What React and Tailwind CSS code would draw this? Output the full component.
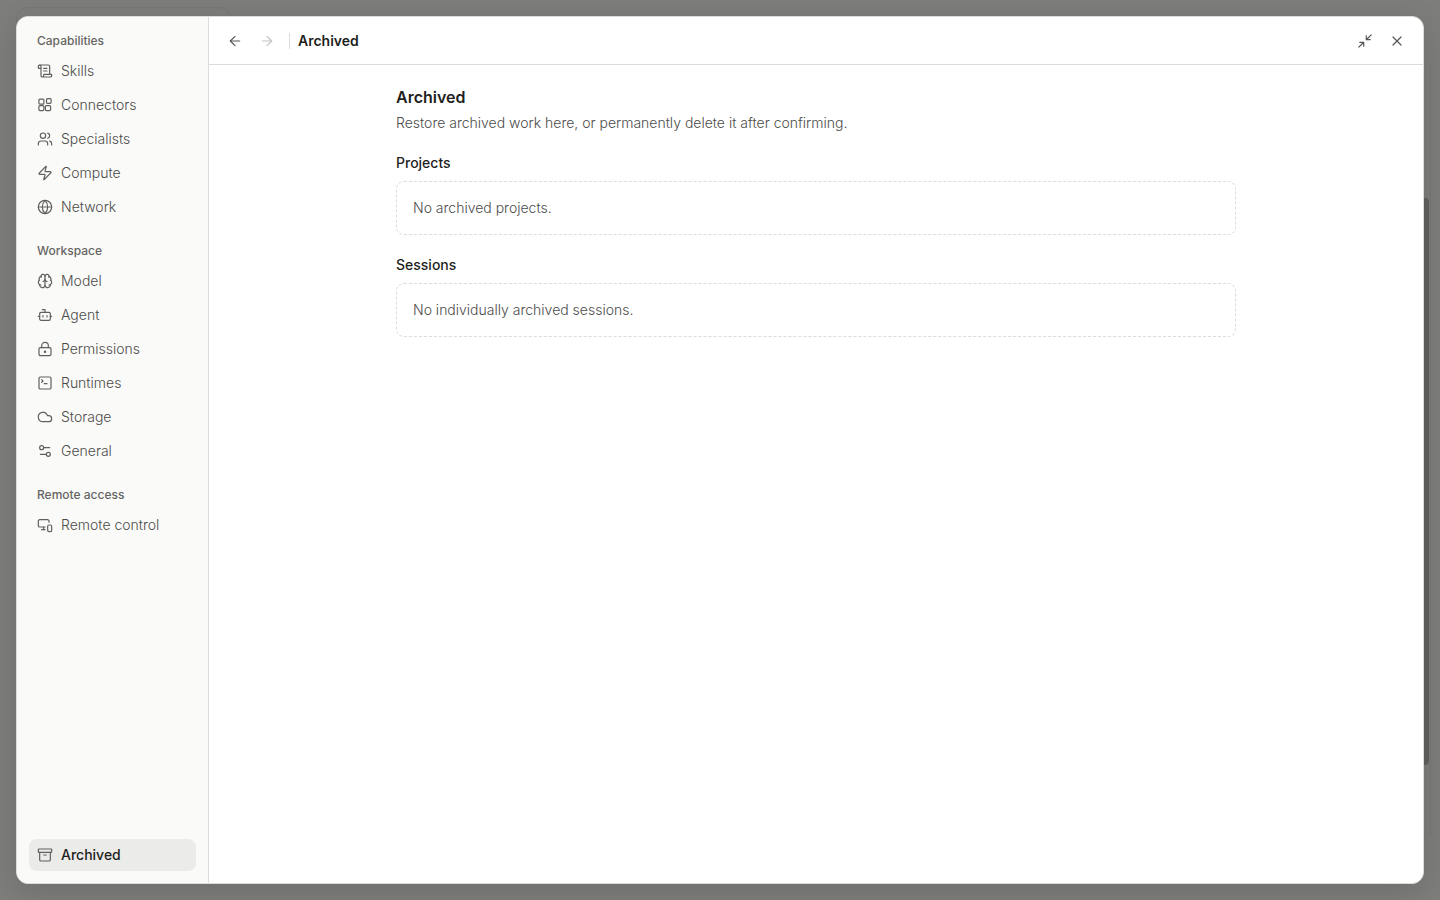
import {
  Archive,
  ArrowLeft,
  ArrowRight,
  Bot,
  Brain,
  Cloud,
  Globe,
  LockKeyhole,
  MonitorSmartphone,
  ScrollText,
  Settings2,
  SquareTerminal,
  Users,
  X,
  Zap,
} from 'lucide-react';

function Svg({ children, className = '' }) {
  return (
    <svg
      viewBox="0 0 16 16"
      fill="none"
      stroke="currentColor"
      strokeWidth="1.2"
      strokeLinecap="round"
      strokeLinejoin="round"
      aria-hidden="true"
      className={className}
    >
      {children}
    </svg>
  );
}

function Connectors({ className }) {
  return (
    <Svg className={className}>
      <rect x="1.9" y="2.2" width="5" height="5" rx="1" />
      <rect x="1.9" y="8.6" width="5" height="5" rx="1" />
      <rect x="8.4" y="8.6" width="5.2" height="5" rx="1" />
      <rect x="9.5" y="1.7" width="4.6" height="4.6" rx="1" />
    </Svg>
  );
}

function Collapse({ className }) {
  return (
    <Svg className={className}>
      <path d="M14.2 1.8 9.5 6.5M9.3 2.8v3.9h3.9M1.8 14.2l4.7-4.7M2.8 9.3h3.9v3.9" />
    </Svg>
  );
}

const groups = [
  {
    label: 'Capabilities',
    items: [
      ['Skills', ScrollText],
      ['Connectors', Connectors],
      ['Specialists', Users],
      ['Compute', Zap],
      ['Network', Globe],
    ],
  },
  {
    label: 'Workspace',
    items: [
      ['Model', Brain],
      ['Agent', Bot],
      ['Permissions', LockKeyhole],
      ['Runtimes', SquareTerminal],
      ['Storage', Cloud],
      ['General', Settings2],
    ],
  },
  { label: 'Remote access', items: [['Remote control', MonitorSmartphone]] },
];

function NavItem({ label, icon: Icon, active }) {
  return (
    <button
      type="button"
      aria-current={active ? 'page' : undefined}
      className={
        active
          ? 'flex h-8 w-full items-center gap-2 rounded-lg bg-[#ebebe9] px-2 text-left text-sm font-medium text-[#1f1f1e]'
          : 'flex h-8 w-full items-center gap-2 rounded-lg px-2 text-left text-sm font-light text-[#4c4c4a]'
      }
    >
      <Icon className="size-4 shrink-0 text-[#60605e]" strokeWidth={1.8} />
      {label}
    </button>
  );
}

function IconButton({ label, disabled, children }) {
  return (
    <button
      type="button"
      aria-label={label}
      disabled={disabled}
      className="flex size-7 items-center justify-center rounded-md text-[#565654] disabled:text-[#c4c4c2]"
    >
      {children}
    </button>
  );
}

function EmptySection({ title, message }) {
  return (
    <section className="mt-5">
      <h3 className="text-sm font-medium text-[#1f1f1e]">{title}</h3>
      <p className="mt-2 rounded-lg border border-dashed border-[#dcdcda] p-4 text-sm font-light text-[#4c4c4a]">
        {message}
      </p>
    </section>
  );
}

export default function App() {
  return (
    <div className="relative h-screen overflow-hidden bg-[#fafaf8] font-['Inter',sans-serif]">
      <div aria-hidden="true" className="absolute inset-0">
        <div className="absolute top-[7px] left-4 h-96 w-[215px] rounded-xl border border-[#ececea]" />
        <div className="absolute top-16 right-[9px] bottom-16 w-px bg-[#ececea]" />
        <div className="absolute top-[198px] right-[11px] h-[567px] w-2 rounded-full bg-[#c1c1bf]" />
      </div>
      <div className="relative flex h-full bg-black/50 p-4">
        <div
          role="dialog"
          aria-label="Settings"
          className="flex min-w-0 flex-1 overflow-hidden rounded-xl border border-[#dcdcd8] bg-white shadow-[0_8px_32px_rgba(0,0,0,0.12)]"
        >
          <nav className="flex w-48 shrink-0 flex-col justify-between border-r border-[#dcdcd8] bg-[#fafaf8] p-3">
            <div className="flex flex-col gap-4">
              {groups.map((group) => (
                <div key={group.label} className="flex flex-col gap-0.5">
                  <h2 className="px-2 py-1 text-xs font-medium text-[#656563]">{group.label}</h2>
                  {group.items.map(([label, icon]) => (
                    <NavItem key={label} label={label} icon={icon} />
                  ))}
                </div>
              ))}
            </div>
            <NavItem label="Archived" icon={Archive} active />
          </nav>
          <div className="flex min-w-0 flex-1 flex-col">
            <header className="flex h-12 shrink-0 items-center border-b border-[#dcdcd8] px-3">
              <div className="flex gap-1">
                <IconButton label="Back">
                  <ArrowLeft className="size-4" strokeWidth={1.8} />
                </IconButton>
                <IconButton label="Forward" disabled>
                  <ArrowRight className="size-4" strokeWidth={1.8} />
                </IconButton>
              </div>
              <div className="mx-2 h-4 w-px bg-[#dcdcd8]" />
              <h1 className="text-sm font-semibold text-[#1f1f1e]">Archived</h1>
              <div className="ml-auto flex gap-1">
                <IconButton label="Exit full screen">
                  <Collapse className="size-4" />
                </IconButton>
                <IconButton label="Close">
                  <X className="size-4" strokeWidth={1.8} />
                </IconButton>
              </div>
            </header>
            <main className="flex-1 overflow-y-auto px-6 py-5">
              <div className="mx-auto max-w-[840px]">
                <h2 className="text-base font-semibold text-[#1f1f1e]">Archived</h2>
                <p className="mt-1 text-sm font-light text-[#4c4c4a]">
                  Restore archived work here, or permanently delete it after confirming.
                </p>
                <EmptySection title="Projects" message="No archived projects." />
                <EmptySection title="Sessions" message="No individually archived sessions." />
              </div>
            </main>
          </div>
        </div>
      </div>
    </div>
  );
}
